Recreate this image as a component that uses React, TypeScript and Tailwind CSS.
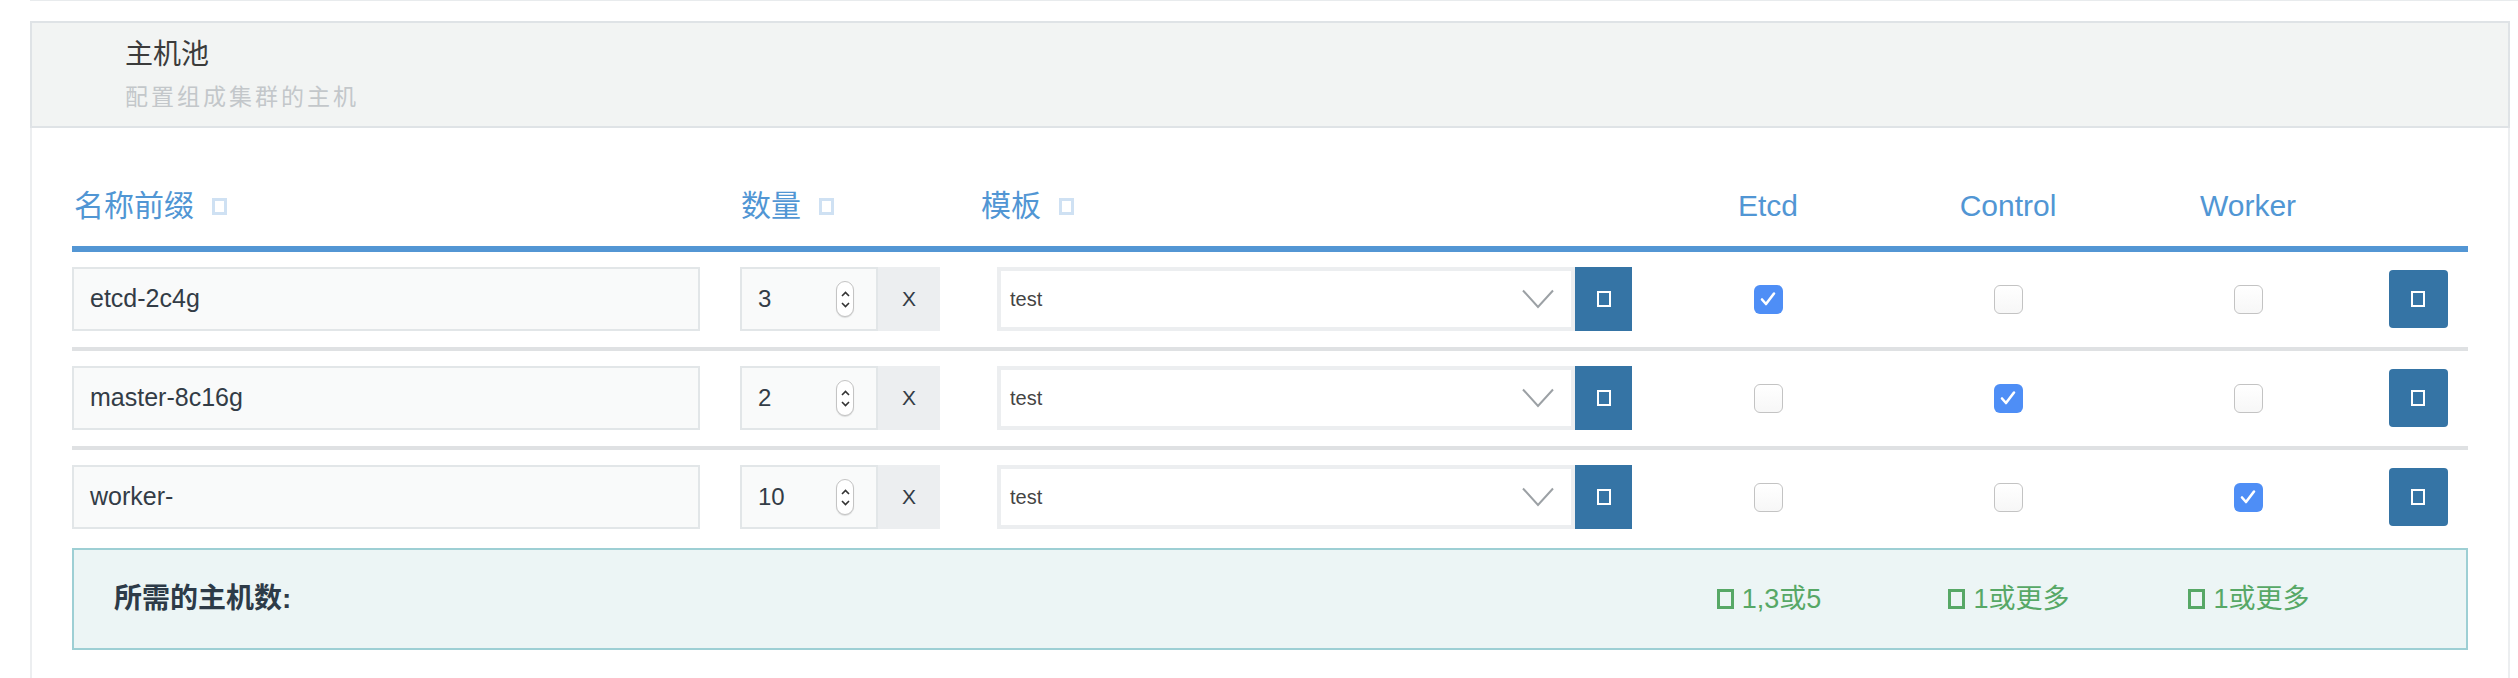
const font = "font-['Liberation_Sans','Noto_Sans_CJK_SC',sans-serif]";

const rows = [
  { name: 'etcd-2c4g', qty: '3', roles: [true, false, false] },
  { name: 'master-8c16g', qty: '2', roles: [false, true, false] },
  { name: 'worker-', qty: '10', roles: [false, false, true] },
];

function Missing({ className }: { className: string }) {
  return <span className={`inline-block box-border ${className}`} />;
}

function Spinner() {
  return (
    <div className="w-[18px] h-[36px] rounded-full border border-[#c4c4c4] bg-white flex flex-col items-center justify-center gap-[5px] shadow-[0_1px_1px_rgba(0,0,0,0.12)]">
      <svg width="9" height="6" viewBox="0 0 9 6" fill="none">
        <path d="M1 5 L4.5 1.5 L8 5" stroke="#333" strokeWidth="1.6" />
      </svg>
      <svg width="9" height="6" viewBox="0 0 9 6" fill="none">
        <path d="M1 1 L4.5 4.5 L8 1" stroke="#333" strokeWidth="1.6" />
      </svg>
    </div>
  );
}

function Checkbox({ checked }: { checked: boolean }) {
  if (checked) {
    return (
      <div className="w-[29px] h-[29px] rounded-[6px] bg-[#4e8ef6] flex items-center justify-center">
        <svg width="18" height="16" viewBox="0 0 18 16" fill="none">
          <path d="M3 8.5 L7 13 L15 2.5" stroke="white" strokeWidth="2.6" strokeLinecap="round" strokeLinejoin="round" />
        </svg>
      </div>
    );
  }
  return (
    <div className="w-[29px] h-[29px] rounded-[6px] border-[1.5px] border-[#c3c3c3] bg-gradient-to-b from-white to-[#f7f7f7]" />
  );
}

function IconButton({ rounded }: { rounded?: boolean }) {
  return (
    <div
      className={`flex items-center justify-center bg-[#3574a5] ${
        rounded ? 'w-[59px] h-[58px] rounded-[4px]' : 'w-[57px] h-[64px]'
      }`}
    >
      <Missing className="w-[14px] h-[16px] border-2 border-white" />
    </div>
  );
}

function HeaderLabel({ text }: { text: string }) {
  return (
    <span className="flex items-center gap-[18px]">
      {text}
      <Missing className="w-[15px] h-[17px] border-[3px] border-[#cfe1f3]" />
    </span>
  );
}

export default function App() {
  return (
    <div className={`min-h-screen bg-white ${font}`}>
      <div className="h-px ml-[30px] bg-[#e8ebed]" />
      <div className="ml-[30px] w-[2480px] mt-[20px]">
        <div className="border-2 border-[#dfe3e6] bg-[#f2f4f3] pl-[93px] pt-[14px] pb-[14px]">
          <div className="text-[28px] leading-[36px] text-[#3b3b3b]">主机池</div>
          <div className="mt-[9px] text-[23px] leading-[30px] tracking-[3px] text-[#c3c7ca]">配置组成集群的主机</div>
        </div>

        <div className="border-x-2 border-[#eceef0] px-[40px] pb-[40px] min-h-[560px]">
          <div className="flex items-end h-[124px] pb-[22px] text-[30px] leading-[36px] text-[#5196d4] border-b-[6px] border-[#5396d4]">
            <div className="w-[668px] pl-[2px]">
              <HeaderLabel text="名称前缀" />
            </div>
            <div className="w-[240px] pl-[1px]">
              <HeaderLabel text="数量" />
            </div>
            <div className="w-[652px] pl-[1px]">
              <HeaderLabel text="模板" />
            </div>
            <div className="w-[16px]" />
            <div className="w-[240px] text-center">Etcd</div>
            <div className="w-[240px] text-center">Control</div>
            <div className="w-[240px] text-center">Worker</div>
            <div className="w-[100px]" />
          </div>

          {rows.map((r, i) => (
            <div
              key={r.name}
              className={`flex items-center pt-[15px] ${
                i < rows.length - 1 ? 'pb-[16px] border-b-4 border-[#dfe1e3]' : ''
              }`}
            >
              <div className="w-[668px]">
                <div className="w-[628px] h-[64px] border-2 border-[#e2e6e8] bg-[#f9fafa] flex items-center px-[16px] text-[25px] text-[#333c46]">
                  {r.name}
                </div>
              </div>
              <div className="w-[240px] flex">
                <div className="w-[138px] h-[64px] border-2 border-[#e2e6e8] bg-[#f9fafa] flex items-center justify-between pl-[16px] pr-[22px] text-[24px] text-[#333c46]">
                  <span>{r.qty}</span>
                  <Spinner />
                </div>
                <div className="w-[62px] h-[64px] bg-[#eceef0] flex items-center justify-center text-[21px] text-[#333c46]">
                  X
                </div>
              </div>
              <div className="w-[652px] pl-[17px] flex">
                <div className="w-[578px] h-[64px] border-4 border-[#eceef0] bg-white flex items-center justify-between pl-[9px] pr-[17px] text-[20px] text-[#444]">
                  <span>test</span>
                  <svg width="32" height="20" viewBox="0 0 32 20" fill="none">
                    <path d="M1 1.5 L16 18 L31 1.5" stroke="#9ca1a5" strokeWidth="2" />
                  </svg>
                </div>
                <IconButton />
              </div>
              <div className="w-[16px]" />
              {r.roles.map((c, j) => (
                <div key={j} className="w-[240px] flex justify-center">
                  <Checkbox checked={c} />
                </div>
              ))}
              <div className="w-[100px] flex justify-center">
                <IconButton rounded />
              </div>
            </div>
          ))}

          <div className="mt-[19px] h-[102px] border-2 border-[#9dcfd4] bg-[#ecf5f5] flex items-center pl-[40px]">
            <div className="w-[1535px] text-[28px] font-bold text-[#2d3b48]">所需的主机数:</div>
            {['1,3或5', '1或更多', '1或更多'].map((t, j) => (
              <div key={j} className="w-[240px] flex justify-center items-center gap-[8px] text-[27px] text-[#57a866]">
                <Missing className="w-[17px] h-[20px] border-[3px] border-[#57a866]" />
                <span>{t}</span>
              </div>
            ))}
          </div>
        </div>
      </div>
    </div>
  );
}
